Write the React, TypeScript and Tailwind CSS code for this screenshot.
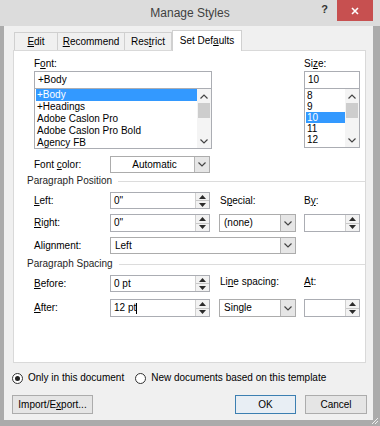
import type { ReactNode } from 'react';

const font = { fontFamily: '"Liberation Sans", Arial, sans-serif' };

function U({ children }: { children: ReactNode }) {
  return <span className="underline underline-offset-[1px] decoration-[0.5px]">{children}</span>;
}

function Tri({ down }: { down?: boolean }) {
  return (
    <svg width="7" height="4" viewBox="0 0 7 4">
      <path d={down ? 'M0 0 L7 0 L3.5 4 Z' : 'M0 4 L7 4 L3.5 0 Z'} fill="#2b2b2b" />
    </svg>
  );
}

function Spinner() {
  return (
    <div className="w-[14px] h-full flex flex-col border-l border-[#d0d0d0] bg-[#f2f2f2]">
      <div className="flex-1 flex items-center justify-center border-b border-[#c8c8c8]">
        <Tri />
      </div>
      <div className="flex-1 flex items-center justify-center">
        <Tri down />
      </div>
    </div>
  );
}

function Chevron() {
  return (
    <div className="w-[15px] h-full flex items-center justify-center border-l border-[#b4b4b4] bg-[#e6e6e6]">
      <svg width="8" height="5" viewBox="0 0 8 5">
        <path d="M0.5 0.5 L4 4 L7.5 0.5" stroke="#444" strokeWidth="1.2" fill="none" />
      </svg>
    </div>
  );
}

function TextBox({ value, w, caret }: { value?: string; w: string; caret?: boolean }) {
  return (
    <div className={`${w} h-full flex border border-[#abadb3] bg-white`}>
      <div className="flex-1 flex items-center pl-[3px] text-black">
        {value}
        {caret && <span className="w-px h-[11px] bg-black" />}
      </div>
      <Spinner />
    </div>
  );
}

function Combo({ value, w, center }: { value: string; w: string; center?: boolean }) {
  return (
    <div className={`${w} h-full flex border border-[#acacac] bg-white`}>
      <div className={`flex-1 flex items-center pl-[4px] text-black ${center ? 'justify-center' : ''}`}>
        {value}
      </div>
      <Chevron />
    </div>
  );
}

function Scroll() {
  return (
    <div className="w-[14px] h-full flex flex-col bg-[#f4f4f4]">
      <div className="h-[14px] flex items-center justify-center">
        <svg width="8" height="5" viewBox="0 0 8 5">
          <path d="M0.5 4.5 L4 1 L7.5 4.5" stroke="#444" strokeWidth="1.2" fill="none" />
        </svg>
      </div>
      <div className="h-[15px] mx-[1px] bg-[#cdcdcd]" />
      <div className="flex-1" />
      <div className="h-[14px] flex items-center justify-center">
        <svg width="8" height="5" viewBox="0 0 8 5">
          <path d="M0.5 0.5 L4 4 L7.5 0.5" stroke="#444" strokeWidth="1.2" fill="none" />
        </svg>
      </div>
    </div>
  );
}

function Heading({ children }: { children: ReactNode }) {
  return (
    <div className="-ml-[7px] h-[14px] flex items-center text-[#1e1e1e]">
      <span>{children}</span>
      <div className="flex-1 ml-[6px] border-t border-[#dcdcdc]" />
    </div>
  );
}

function Radio({ on, label }: { on?: boolean; label: string }) {
  return (
    <div className="flex items-center gap-[5px]">
      <div className="w-[11px] h-[11px] rounded-full border border-[#333] bg-white flex items-center justify-center">
        {on && <div className="w-[5px] h-[5px] rounded-full bg-[#222]" />}
      </div>
      <span>{label}</span>
    </div>
  );
}

export default function App() {
  const fonts = ['+Body', '+Headings', 'Adobe Caslon Pro', 'Adobe Caslon Pro Bold', 'Agency FB'];
  const sizes = ['8', '9', '10', '11', '12'];

  return (
    <div className="w-[380px] h-[426px] flex flex-col bg-[#dcdcdc] text-[10px] leading-[12px] text-black overflow-hidden relative" style={font}>
      {/* Title bar */}
      <div className="h-[26px] flex items-start shrink-0">
        <div className="w-[68px]" />
        <div className="flex-1 text-center text-[12px] leading-[16px] text-[#404040] pt-[5px]">Manage Styles</div>
        <div className="w-[25px] text-center font-bold text-[11px] text-[#333] pt-[3px]">?</div>
        <div className="w-[36px] h-[21px] bg-[#c75050] flex items-center justify-center">
          <svg width="8" height="8" viewBox="0 0 8 8">
            <path d="M1 1 L7 7 M7 1 L1 7" stroke="white" strokeWidth="1.6" />
          </svg>
        </div>
        <div className="w-[7px]" />
      </div>

      {/* Body */}
      <div className="flex-1 flex flex-col bg-[#f0f0f0] border-l-[4px] border-r-[7px] border-b-[6px] border-[#ababab] pl-[8px] pr-[6px] pt-[4px]">
        {/* Tabs */}
        <div className="flex items-end ml-[2px] h-[20px]">
          <div className="w-[44px] h-[18px] border border-b-0 border-[#d0d0d0] bg-[#f0f0f0] flex items-center justify-center">
            <span><U>E</U>dit</span>
          </div>
          <div className="w-[67px] h-[18px] border border-l-0 border-b-0 border-[#d0d0d0] bg-[#f0f0f0] flex items-center justify-center">
            <span><U>R</U>ecommend</span>
          </div>
          <div className="w-[47px] h-[18px] border border-l-0 border-b-0 border-[#d0d0d0] bg-[#f0f0f0] flex items-center justify-center">
            <span>Res<U>t</U>rict</span>
          </div>
          <div className="w-[70px] h-[21px] -mb-px relative z-10 border border-b-0 border-[#d0d0d0] bg-white flex items-center justify-center">
            <span>Set Def<U>a</U>ults</span>
          </div>
        </div>

        {/* Panel */}
        <div className="ml-[1px] w-[353px] h-[313px] border border-[#d9d9d9] bg-white pl-[20px] pt-[5px] flex flex-col">
          <div className="flex">
            <div className="w-[178px]">
              <div className="h-[15px] flex items-center">
                <span>F<U>o</U>nt:</span>
              </div>
              <div className="h-[18px] border border-[#abadb3] flex items-center pl-[3px]">+Body</div>
              <div className="h-[60px] border border-t-0 border-[#abadb3] flex">
                <div className="flex-1">
                  {fonts.map((f, i) => (
                    <div
                      key={f}
                      className={`h-[12px] leading-[12px] pl-[1px] ml-[1px] ${i === 0 ? 'bg-[#3399ff] text-white' : ''}`}
                    >
                      {f}
                    </div>
                  ))}
                </div>
                <Scroll />
              </div>
            </div>
            <div className="ml-[92px] w-[56px]">
              <div className="h-[15px] flex items-center">
                <span>Si<U>z</U>e:</span>
              </div>
              <div className="h-[18px] border border-[#abadb3] flex items-center pl-[3px]">10</div>
              <div className="h-[59px] border border-t-0 border-[#abadb3] flex">
                <div className="flex-1 pt-[1px]">
                  {sizes.map((s) => (
                    <div
                      key={s}
                      className={`h-[11px] leading-[11px] pl-[1px] ml-[1px] ${s === '10' ? 'bg-[#3399ff] text-white' : ''}`}
                    >
                      {s}
                    </div>
                  ))}
                </div>
                <Scroll />
              </div>
            </div>
          </div>

          {/* Font color */}
          <div className="mt-[7px] h-[17px] flex items-center">
            <div className="w-[76px]">
              Font <U>c</U>olor:
            </div>
            <Combo value="Automatic" w="w-[100px]" center />
          </div>

          <div className="mt-[1px]">
            <Heading>Paragraph Position</Heading>
          </div>

          {/* Left */}
          <div className="mt-[4px] h-[17px] flex items-center">
            <div className="w-[76px]">
              <U>L</U>eft:
            </div>
            <TextBox value={'0"'} w="w-[100px]" />
            <div className="ml-[10px] w-[84px]">
              S<U>p</U>ecial:
            </div>
            <div>
              B<U>y</U>:
            </div>
          </div>

          {/* Right */}
          <div className="mt-[5px] h-[18px] flex items-center">
            <div className="w-[76px]">
              <U>R</U>ight:
            </div>
            <TextBox value={'0"'} w="w-[100px]" />
            <div className="ml-[9px] h-[18px] flex">
              <Combo value="(none)" w="w-[77px]" />
            </div>
            <div className="ml-[8px] h-[18px] flex">
              <TextBox w="w-[56px]" />
            </div>
          </div>

          {/* Alignment */}
          <div className="mt-[5px] h-[17px] flex items-center">
            <div className="w-[76px]">
              Ali<U>g</U>nment:
            </div>
            <Combo value="Left" w="w-[186px]" />
          </div>

          <div className="mt-[3px]">
            <Heading>Paragraph Spacing</Heading>
          </div>

          {/* Before */}
          <div className="mt-[4px] h-[17px] flex items-center">
            <div className="w-[76px]">
              <U>B</U>efore:
            </div>
            <TextBox value="0 pt" w="w-[100px]" />
            <div className="ml-[10px] w-[84px] -mt-[3px]">
              Li<U>n</U>e spacing:
            </div>
            <div className="-mt-[3px]">
              <U>A</U>t:
            </div>
          </div>

          {/* After */}
          <div className="mt-[7px] h-[18px] flex items-center">
            <div className="w-[76px]">
              <U>A</U>fter:
            </div>
            <TextBox value="12 pt" w="w-[100px]" caret />
            <div className="ml-[9px] h-[18px] flex">
              <Combo value="Single" w="w-[77px]" />
            </div>
            <div className="ml-[8px] h-[18px] flex">
              <TextBox w="w-[56px]" />
            </div>
          </div>
        </div>

        {/* Radios */}
        <div className="mt-[8px] h-[14px] flex items-center gap-[11px]">
          <Radio on label="Only in this document" />
          <Radio label="New documents based on this template" />
        </div>

        {/* Buttons */}
        <div className="mt-[10px] h-[19px] flex">
          <div className="w-[81px] border border-[#acacac] bg-[#e5e5e5] flex items-center justify-center">
            <span>Import/E<U>x</U>port...</span>
          </div>
          <div className="flex-1" />
          <div className="w-[61px] border border-[#3c7fb1] bg-[#e8eef4] flex items-center justify-center">OK</div>
          <div className="w-[62px] ml-[9px] border border-[#acacac] bg-[#e5e5e5] flex items-center justify-center">
            Cancel
          </div>
        </div>
      </div>

      {/* Resize grip */}
      <svg className="absolute right-[1px] bottom-[1px]" width="9" height="9" viewBox="0 0 9 9">
        <path d="M8 2 L2 8 M8 5 L5 8" stroke="#eeeeee" strokeWidth="1" />
      </svg>
    </div>
  );
}
